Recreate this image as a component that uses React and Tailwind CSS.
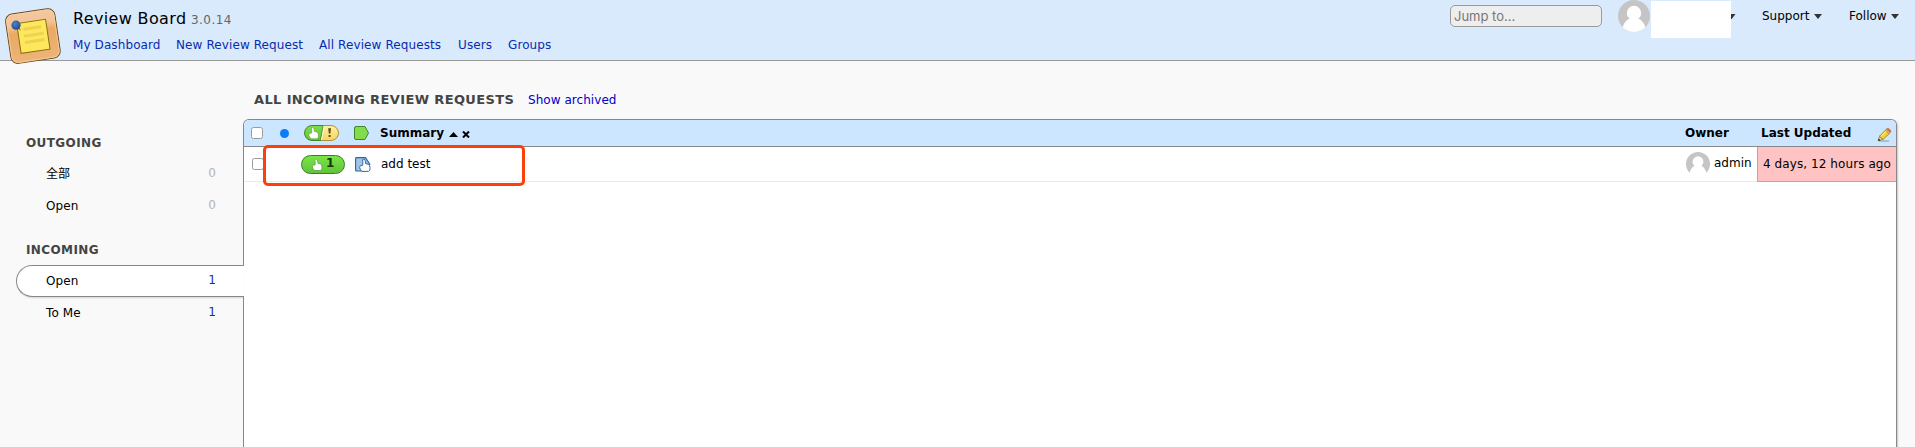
import React from 'react';

function Logo() {
  return (
    <svg className="h-[66px] w-[66px] shrink-0" viewBox="0 0 66 66">
      <defs>
        <linearGradient id="wood" x1="0" y1="0" x2="0" y2="1">
          <stop offset="0" stopColor="#f3c79e" />
          <stop offset="0.25" stopColor="#f4c496" />
          <stop offset="0.4" stopColor="#eaa963" />
          <stop offset="1" stopColor="#edb478" />
        </linearGradient>
        <radialGradient id="pin" cx="0.4" cy="0.35" r="0.7">
          <stop offset="0" stopColor="#4a83c4" />
          <stop offset="1" stopColor="#1d4c8c" />
        </radialGradient>
      </defs>
      <g transform="rotate(-8.5 32.9 36.1)">
        <rect x="8" y="11.200" width="49.800" height="49.800" rx="7" fill="url(#wood)" stroke="#6e4a1c" strokeWidth="1" />
        <rect x="9" y="12.200" width="47.800" height="47.800" rx="6.200" fill="none" stroke="#f6d5ae" strokeWidth="0.700" />
        <rect x="18.7" y="21.3" width="29.2" height="30.200" fill="#fde75c" stroke="#8a6d14" strokeWidth="1" />
        <path d="M24.5 28h18M24 34.8h20M24 41.3h20" stroke="#efd153" strokeWidth="3" />
      </g>
      <circle cx="16" cy="25.2" r="4.6" fill="url(#pin)" />
      <path d="M18.5 28.2l2 1.6" stroke="#333" strokeWidth="1" />
    </svg>
  );
}

function Avatar({ className, round }) {
  return (
    <svg className={className} viewBox="0 0 32 32">
      <circle cx="16" cy="16" r="16" fill="#c5c5c5" />
      <circle cx="16" cy="13" r="7.2" fill="#fff" />
      <path d={round ? 'M4.600 27.200C6.200 22 9.500 19 12 18.400h8c2.500.6 5.800 3.600 7.400 8.800A16 16 0 0 1 4.600 27.200z' : 'M4.600 29C6 22 9.500 19 12 18.400h8c2.500.6 6 3.600 7.400 10.600V32H4.600z'} fill="#fff" />
    </svg>
  );
}

function Caret() {
  return (
    <svg className="h-[5px] w-[8px]" viewBox="0 0 8 5"><path d="M0 0h8L4 5z" fill="#333" /></svg>
  );
}

const THUMB = 'M3.100.5Q4.300-.4 5.200.7Q5.800 2.500 5.900 4.300Q8.800 4.400 9.500 6Q10.100 7.600 9.900 9.600Q9.700 11.200 8.500 11.500H2.500Q1 10 .4 8.200Q.1 6.700 1.200 6.300L3 5.900Q3.500 4.700 3.200 3.300z';

function ShipItHeader() {
  return (
    <svg className="h-[16px] w-[35px]" viewBox="0 0 35 16">
      <defs>
        <clipPath id="pill"><rect x="0.5" y="0.5" width="34" height="15" rx="7.5" /></clipPath>
        <linearGradient id="gr" x1="0" y1="0" x2="0" y2="1"><stop offset="0" stopColor="#7fdd4c" /><stop offset="1" stopColor="#62c43a" /></linearGradient>
        <linearGradient id="ye" x1="0" y1="0" x2="0" y2="1"><stop offset="0" stopColor="#fff2a0" /><stop offset="1" stopColor="#f5d460" /></linearGradient>
      </defs>
      <g clipPath="url(#pill)">
        <rect width="35" height="16" fill="url(#ye)" />
        <path d="M0 0h20l-3 16H0z" fill="url(#gr)" />
        <path d="M20.200 0l-3 16" stroke="#fffbe0" strokeWidth="1.300" />
        <path d="M19.200 0l-3 16" stroke="#528b32" strokeWidth="0.800" />
      </g>
      <path d="M19 .5H8A7.500 7.500 0 0 0 8 15.500h9" fill="none" stroke="#3f8a25" />
      <path d="M19 .5h8A7.500 7.500 0 0 1 27 15.500H17" fill="none" stroke="#b0903e" />
      <path d={THUMB} transform="translate(4.500 2.200)" fill="#fff" stroke="#3d7728" strokeWidth="0.400" />
      <path d="M24.200 3.200h2.800l-.6 5.400h-1.600zM24.600 10h2v2h-2z" fill="#5c4b12" />
    </svg>
  );
}

function Pencil() {
  return (
    <svg className="h-[14px] w-[15px]" viewBox="0 0 15 14">
      <path d="M2 13h10" stroke="#8ba2b8" strokeWidth="1.400" opacity="0.800" />
      <path d="M1.200 12.600L2.600 8.200 6 11.400z" fill="#f2dfae" stroke="#665522" strokeWidth="0.600" />
      <path d="M.8 13l1-2.400 1.600 1.600z" fill="#222" />
      <path d="M2.600 8.200L8.300 2.200l3.800 3.500L6 11.500z" fill="#f3d22d" stroke="#8b6914" strokeWidth="0.700" />
      <path d="M4 8.500l5.200-5.300" stroke="#fff69a" strokeWidth="1" />
      <path d="M8.300 2.200l1.200-1.200 3.800 3.500-1.200 1.200z" fill="#e6c08a" stroke="#8f6a3a" strokeWidth="0.400" />
      <path d="M9.500 1q1.200-1 2.300-.3l1.600 1.400q1 1.200-.1 2.400z" fill="#e8792c" stroke="#a54512" strokeWidth="0.500" />
    </svg>
  );
}

function Box() {
  return <span className="block h-[12px] w-[12px] rounded-[2.500px] border border-[#9b9b9b] bg-white" />;
}

function Group({ title, className, children }) {
  return (
    <section className={className}>
      <h3 className="h-[16px] pl-[26px] text-[12px] font-bold leading-[16px] tracking-[0.400px] text-[#444]">{title}</h3>
      {children}
    </section>
  );
}

function Item({ label, count, active, muted }) {
  return (
    <div className={active ? 'relative z-10 ml-[16px] mr-[-1px] flex h-[32px] items-center rounded-l-[16px] border border-r-0 border-[#888] bg-white pl-[29px] pr-[28px] shadow-[0_2px_2px_-1px_rgba(0,0,0,0.150)]' : 'flex h-[32px] items-center pl-[46px] pr-[27px]'}>
      <span className="flex-1 tracking-[0.100px]">{label}</span>
      <span className={muted ? 'pb-[2px] text-[#b4b4b4]' : 'pb-[2px] text-[#1530a8]'}>{count}</span>
    </div>
  );
}

export default function App() {
  return (
    <div className="flex h-[447px] w-[1915px] flex-col overflow-hidden bg-[#f9f9f9] font-['DejaVu_Sans','Noto_Sans_CJK_SC',sans-serif] text-[12px] leading-[16px] text-black">
      <header className="flex h-[61px] shrink-0 border-b border-[#999] bg-[#d8eafc]">
        <Logo />
        <div className="flex-1 pl-[7px] pt-[8px]">
          <div className="flex h-[21px] items-baseline">
            <h1 className="w-[118px] whitespace-nowrap text-[16px] leading-[21px] tracking-[0.350px]">Review Board</h1>
            <span className="text-[12px] tracking-[0.450px] text-[#666]">3.0.14</span>
          </div>
          <nav className="mt-[8px] flex whitespace-nowrap tracking-[0.100px] text-[#0a2bb0]">
            <a className="w-[103px]">My Dashboard</a>
            <a className="w-[143px]">New Review Request</a>
            <a className="w-[139px]">All Review Requests</a>
            <a className="w-[50px]">Users</a>
            <a>Groups</a>
          </nav>
        </div>
        <div className="flex w-[465px] shrink-0 items-start">
          <div className="mt-[5px] h-[22px] w-[152px] rounded-[5px] border border-[#999] bg-[#eee] pl-[3px] font-[Inter,sans-serif] text-[13px] leading-[21px] text-[#777]">Jump to...</div>
          <Avatar className="ml-[16px] h-[32px] w-[32px]" round />
          <div className="ml-[1px] mt-[1px] h-[37px] w-[80px] bg-white" />
          <svg className="mt-[14px] h-[5px] w-[5px]" viewBox="0 0 5 5"><path d="M0 0h4.500L.7 5H0z" fill="#333" /></svg>
          <div className="ml-[26px] mt-[8px] flex w-[87px] items-center"><span className="w-[52px]">Support</span><Caret /></div>
          <div className="mt-[8px] flex items-center"><span className="w-[42px]">Follow</span><Caret /></div>
        </div>
      </header>
      <div className="flex flex-1">
        <aside className="w-[243px] shrink-0 pt-[74px]">
          <Group title="OUTGOING" className="h-[107px]">
            <div className="mt-[7px]">
              <Item label="全部" count="0" muted />
              <Item label="Open" count="0" muted />
            </div>
          </Group>
          <Group title="INCOMING">
            <div className="mt-[7px]">
              <Item label="Open" count="1" active />
              <Item label="To Me" count="1" />
            </div>
          </Group>
        </aside>
        <main className="flex w-[1654px] flex-col">
          <div className="flex h-[58px] items-start pl-[11px] pt-[31px]">
            <h2 className="w-[274px] whitespace-nowrap text-[13px] font-bold tracking-[0.370px] text-[#444]">ALL INCOMING REVIEW REQUESTS</h2>
            <a className="tracking-[0.050px] text-[#0000cc]">Show archived</a>
          </div>
          <div className="flex-1 rounded-t-[6px] border border-b-0 border-[#888] bg-white shadow-[1px_1px_2px_rgba(0,0,0,0.200)]">
            <div className="flex h-[27px] items-center rounded-t-[5px] border-b border-[#888] bg-[#cde6ff] font-bold">
              <div className="w-[36px] pl-[7px]"><Box /></div>
              <div className="w-[24px]"><span className="block h-[9px] w-[9px] rounded-full bg-[#0a7cf5]" /></div>
              <div className="w-[50px]"><ShipItHeader /></div>
              <svg className="h-[14px] w-[16px]" viewBox="0 0 16 14"><path d="M2 .5h9L14.500 7l-3.500 6.500H2Q.5 13.500.5 12V2Q.5.5 2 .5z" fill="#83dc4c" stroke="#43852d" /></svg>
              <span className="ml-[10px] w-[69px]">Summary</span>
              <svg className="mt-[2px] h-[5px] w-[9px]" viewBox="0 0 9 5"><path d="M0 5h9L4.500 0z" /></svg>
              <svg className="ml-[4px] mt-[3px] h-[7px] w-[8px]" viewBox="0 0 8 7"><path d="M1 .5l6 6M7 .5l-6 6" stroke="#000" strokeWidth="2" /></svg>
              <span className="ml-auto w-[76px] text-[12px]">Owner</span>
              <span className="w-[116px] whitespace-nowrap">Last Updated</span>
              <div className="mr-[4px] mt-[3px]"><Pencil /></div>
            </div>
            <div className="relative flex h-[35px] items-center border-b border-[#ebebeb]">
              <div className="w-[57px] pl-[8px]"><Box /></div>
              <div className="flex h-[19px] w-[44px] items-center rounded-full border border-[#387f20] bg-gradient-to-b from-[#78e547] to-[#62c43a] pl-[10px]">
                <svg className="mt-[2px] h-[12px] w-[11px]" viewBox="0 0 11 12"><path d={THUMB} fill="#fff" stroke="#3d7728" strokeWidth="0.500" /></svg>
                <span className="ml-[3px] pb-[2px] font-bold text-[#17350c]">1</span>
              </div>
              <svg className="ml-[10px] h-[15px] w-[16px]" viewBox="0 0 16 15">
                <path d="M1.500.6H10.500L14.800 7.300 10.500 14H1.500Q.6 14 .6 13V1.500Q.6.6 1.500.6z" fill="#9ec4e8" stroke="#31639b" strokeWidth="1.100" />
                <path d={THUMB} transform="translate(4.300 2) scale(1.080)" fill="#fff" stroke="#31639b" strokeWidth="0.900" />
              </svg>
              <span className="ml-[10px]">add test</span>
              <Avatar className="ml-auto h-[24px] w-[24px]" />
              <span className="ml-[4px] w-[43px] pb-[2px]">admin</span>
              <div className="flex h-[35px] w-[139px] shrink-0 items-center whitespace-nowrap border border-r-0 border-t-0 border-[#ef8f8f] bg-[#ffc3c3] pl-[5px] tracking-[0.080px]">4 days, 12 hours ago</div>
              <div className="absolute left-[19px] top-[-2px] h-[41px] w-[262px] rounded-[5px] border-[3px] border-[#fc3f0b]" />
            </div>
          </div>
        </main>
      </div>
    </div>
  );
}
